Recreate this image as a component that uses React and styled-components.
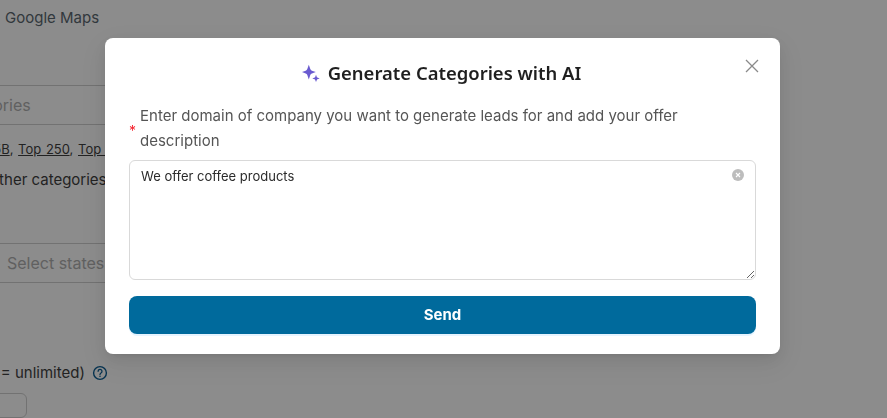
import React from 'react'
import styled, { createGlobalStyle } from 'styled-components'

const GlobalStyle = createGlobalStyle`
    html, body {
        margin: 0;
        padding: 0;
        height: 100%;
        overflow: hidden;
        background: #fff;
        font-family: "Inter", "Liberation Sans", sans-serif;
    }
`

const App = () => {
    return (
        <>
            <GlobalStyle />
            <Page>
                <MapsRow>Google Maps</MapsRow>
                <FieldBox>Select categories</FieldBox>
                <LinksRow>
                    <a>Top 2.5B</a>, <a>Top 250</a>, <a>Top 500</a>
                </LinksRow>
                <OtherRow>Include other categories</OtherRow>
                <StatesBox>Select states</StatesBox>
                <LimitRow>
                    Max leads (0 = unlimited)
                    <HelpIcon viewBox="0 0 16 16" fill="none">
                        <circle cx="8" cy="8" r="6.4" stroke="#0a5c92" strokeWidth="1.4" />
                        <path d="M6.1 6.3a1.95 1.95 0 1 1 2.9 1.7c-.65.38-1 .75-1 1.4" stroke="#0a5c92" strokeWidth="1.3" strokeLinecap="round" />
                        <circle cx="8" cy="11.3" r=".8" fill="#0a5c92" />
                    </HelpIcon>
                </LimitRow>
                <NumberBox />
            </Page>
            <Overlay>
                <Modal>
                    <CloseButton aria-label="Close">
                        <svg width="14" height="14" viewBox="0 0 14 14" fill="none">
                            <path d="M1 1l12 12M13 1L1 13" stroke="#8a8a8a" strokeWidth="1.3" />
                        </svg>
                    </CloseButton>
                    <Title>
                        <svg width="18" height="18" viewBox="0 0 18 18" fill="#6a5bd0">
                            <path d="M6.800 .8l1.500 4.300c.3.800.8 1.300 1.600 1.600l3.900 1.400-3.900 1.400c-.8.300-1.300.8-1.600 1.600l-1.500 4.300-1.500-4.300c-.3-.8-.8-1.300-1.600-1.600L0 8.100l3.700-1.400c.8-.3 1.300-.8 1.600-1.600z" />
                            <path d="M14 10.800l.8 2.100c.1.300.3.500.6.600l2.300.9-2.300.9c-.3.100-.5.300-.6.600l-.8 2.100-.8-2.100c-.1-.3-.3-.5-.6-.6l-2.300-.9 2.300-.9c.3-.1.500-.3.600-.6z" />
                        </svg>
                        Generate Categories with AI
                    </Title>
                    <Label>
                        <Required>*</Required>
                        <span>Enter domain of company you want to generate leads for and add your offer description</span>
                    </Label>
                    <AreaWrap>
                        <Area defaultValue="We offer coffee products" />
                        <ClearIcon viewBox="0 0 12 12">
                            <circle cx="6" cy="6" r="6" fill="#bdbdbd" />
                            <path d="M4 4l4 4M8 4l-4 4" stroke="#fff" strokeWidth="1.1" />
                        </ClearIcon>
                    </AreaWrap>
                    <SendButton>Send</SendButton>
                </Modal>
            </Overlay>
        </>
    )
}

export default App

const Page = styled.div`
    width: 887px;
    height: 418px;
    overflow: hidden;
    color: #3f3f3f;
    font-size: 15px;
    box-sizing: border-box;
    display: flex;
    flex-direction: column;
    align-items: flex-start;
`

const MapsRow = styled.div`
    margin: 9px 0 0 5px;
    font-size: 15px;
    line-height: 18px;
    color: #5a6770;
`

const FieldBox = styled.div`
    margin: 58px 0 0 -120px;
    width: 400px;
    height: 39px;
    border-top: 1px solid #cfcfcf;
    border-bottom: 1px solid #cfcfcf;
    padding-left: 19px;
    line-height: 38px;
    font-size: 16px;
    color: #b0b0b0;
`

const LinksRow = styled.div`
    margin: 14px 0 0 -46px;
    line-height: 20px;
    font-size: 13px;
    white-space: nowrap;
    word-spacing: 1px;

    a {
        text-decoration: underline;
    }
`

const OtherRow = styled.div`
    margin: 11px 0 0 -66px;
    line-height: 20px;
    font-size: 15px;
    white-space: nowrap;
`

const StatesBox = styled(FieldBox)`
    margin: 53px 0 0 -20px;
    padding-left: 27px;
`

const LimitRow = styled.div`
    margin: 80px 0 0 -95px;
    display: flex;
    align-items: center;
    gap: 7px;
    line-height: 20px;
    font-size: 15px;
    white-space: nowrap;
`

const HelpIcon = styled.svg`
    width: 16px;
    height: 16px;
`

const NumberBox = styled.div`
    margin: 10px 0 0 -60px;
    width: 85px;
    height: 60px;
    border: 1px solid #cfcfcf;
    border-radius: 6px;
`

const Overlay = styled.div`
    position: fixed;
    inset: 0;
    background: rgba(0, 0, 0, 0.45);
    display: flex;
    align-items: flex-start;
    justify-content: center;
    padding-top: 38px;
`

const Modal = styled.div`
    position: relative;
    width: 675px;
    height: 316px;
    margin-left: -2px;
    box-sizing: border-box;
    padding: 23px 24px 20px;
    background: #fff;
    border-radius: 8px;
    box-shadow: 0 6px 16px rgba(0, 0, 0, 0.08), 0 3px 6px -4px rgba(0, 0, 0, 0.12), 0 9px 28px 8px rgba(0, 0, 0, 0.05);
    display: flex;
    flex-direction: column;
`

const CloseButton = styled.button`
    position: absolute;
    top: 21px;
    right: 21px;
    width: 14px;
    height: 14px;
    padding: 0;
    border: 0;
    background: none;
    display: flex;
`

const Title = styled.h2`
    margin: 0;
    padding-right: 2px;
    height: 24px;
    display: flex;
    align-items: center;
    justify-content: center;
    gap: 8px;
    font-family: "Noto Sans", "Inter", sans-serif;
    font-size: 18.45px;
    line-height: 24px;
    font-weight: 600;
    color: #1f1f1f;
`

const Label = styled.label`
    margin-top: 18px;
    display: flex;
    align-items: center;
    gap: 4px;
    font-size: 15px;
    line-height: 25px;
    color: #555;
`

const Required = styled.span`
    color: #f5222d;
    font-size: 14px;
    line-height: 1;
    padding-top: 6px;
`

const AreaWrap = styled.div`
    position: relative;
    margin-top: 7px;
    height: 120px;
`

const Area = styled.textarea`
    display: block;
    width: 100%;
    height: 100%;
    box-sizing: border-box;
    padding: 6px 11px;
    border: 1px solid #d9d9d9;
    border-radius: 6px;
    font-family: "Inter", "Liberation Sans", sans-serif;
    font-size: 13px;
    line-height: 18px;
    color: #2a2a2a;
    outline: none;
`

const ClearIcon = styled.svg`
    position: absolute;
    top: 9px;
    right: 12px;
    width: 12px;
    height: 12px;
`

const SendButton = styled.button`
    margin-top: 16px;
    height: 38px;
    padding: 0 0 2px;
    border: 0;
    border-radius: 8px;
    background: #006a9c;
    color: #fff;
    font-family: "Inter", "Liberation Sans", sans-serif;
    font-size: 15px;
    font-weight: 700;
    box-shadow: 0 2px 0 rgba(5, 145, 255, 0.1);
`
